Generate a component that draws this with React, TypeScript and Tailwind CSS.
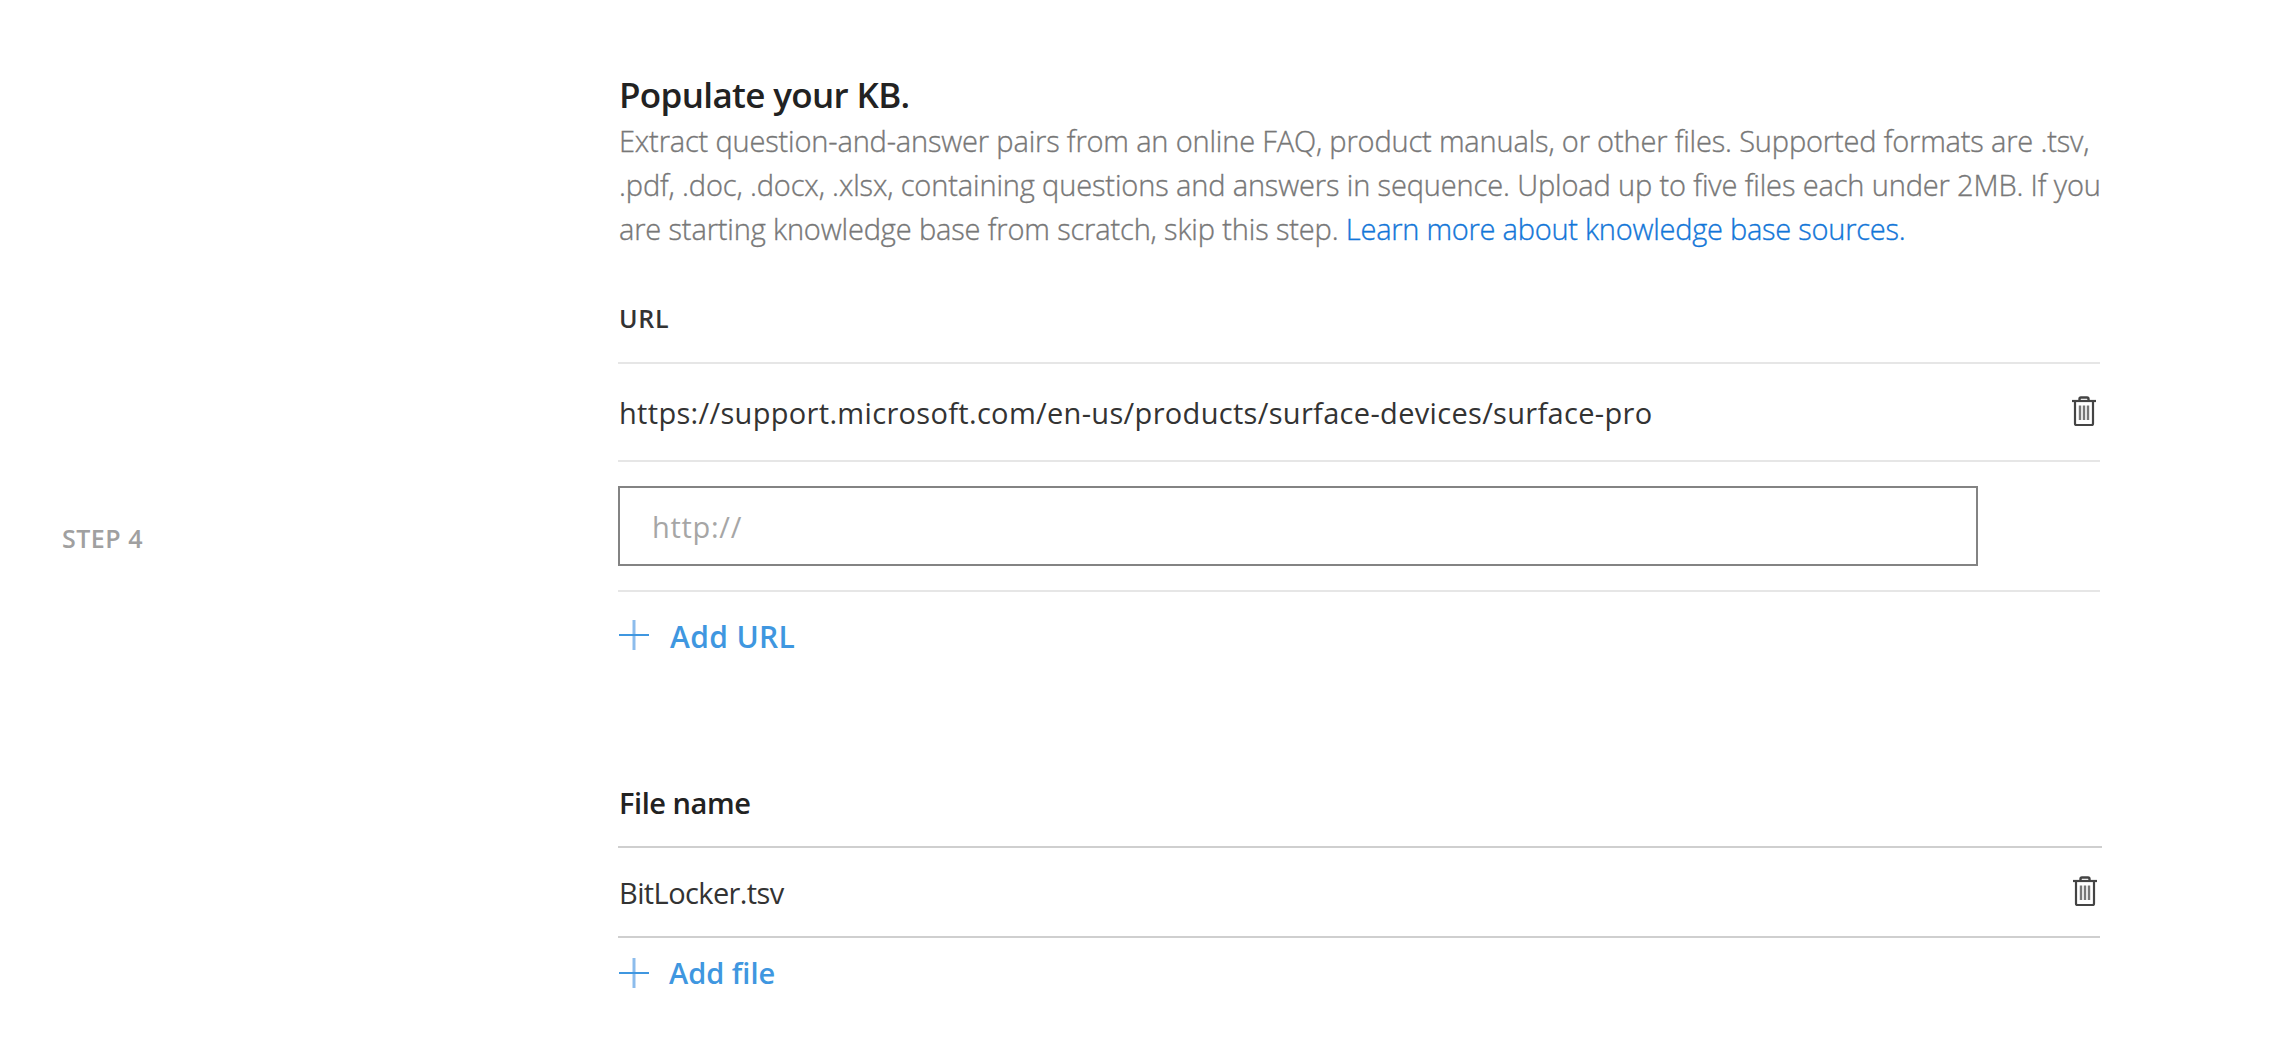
function TrashIcon() {
  return (
    <svg width="28" height="34" viewBox="0 0 28 34" fill="none" stroke="#444" strokeWidth="2.200">
      <path d="M2 6H26" />
      <path d="M9.500 5.500V4Q9.500 2.500 11 2.500H17Q18.500 2.500 18.500 4V5.500" strokeWidth="2.400" />
      <path d="M5 6V28.500Q5 30 6.500 30H21.500Q23 30 23 28.500V6" />
      <path d="M10 10.500V25M14 10.500V25M18 10.500V25" stroke="#777" strokeWidth="2.400" />
    </svg>
  );
}

function PlusIcon() {
  return (
    <svg width="32" height="32" viewBox="0 0 32 32" fill="none" strokeWidth="2">
      <path d="M16 1V31" stroke="#8cbcec" strokeWidth="3" />
      <path d="M1 16H31" stroke="#3f97e0" />
    </svg>
  );
}

export default function App() {
  return (
    <main className="flex h-[1048px] w-[2270px] overflow-hidden bg-white font-['Open_Sans','Noto_Sans',sans-serif] whitespace-nowrap text-[#333]">
      <aside className="w-[618px] shrink-0 pt-[518px] pl-[62px] text-[25px] leading-[40px] font-semibold tracking-[0.5px] text-[#a0a0a0]">
        STEP 4
      </aside>

      <div className="w-[1484px] shrink-0 pt-[71px]">
        <h1 className="pl-px text-[35px] leading-[48px] font-semibold tracking-[-0.65px] text-[#222]">Populate your KB.</h1>
        <p className="pl-px text-[29px] leading-[44px] font-light text-[#777] [-webkit-text-stroke:0.35px]">
          <span className="block tracking-[-0.17px]">
            Extract question-and-answer pairs from an online FAQ, product manuals, or other files. Supported formats are .tsv,
          </span>
          <span className="block tracking-[-0.14px]">
            .pdf, .doc, .docx, .xlsx, containing questions and answers in sequence. Upload up to five files each under 2MB. If you
          </span>
          <span className="block tracking-[-0.15px]">
            are starting knowledge base from scratch, skip this step.{" "}
            <a className="tracking-[-0.25px] text-[#1276d8]">Learn more about knowledge base sources.</a>
          </span>
        </p>

        <section className="w-[1482px]">
          <h2 className="h-[113px] border-b-2 border-[#e6e6e6] pt-[47px] pl-px text-[25px] leading-[40px] font-semibold tracking-[0.7px]">
            URL
          </h2>
          <div className="flex h-[98px] items-center justify-between border-b-2 border-[#e6e6e6]">
            <span className="pt-px pl-px text-[29px] tracking-[0.32px]">
              https://support.microsoft.com/en-us/products/surface-devices/surface-pro
            </span>
            <span className="pr-[2px]"><TrashIcon /></span>
          </div>
          <div className="h-[130px] border-b-2 border-[#e6e6e6] pt-[24px]">
            <input
              className="h-[80px] w-[1360px] border-2 border-[#838383] pl-[32px] text-[29px] tracking-[0.7px] outline-none placeholder:text-[#a6a6a6]"
              placeholder="http://"
            />
          </div>
          <button className="flex h-[86px] items-center gap-[20px] text-[#3f97e0]">
            <PlusIcon />
            <span className="pt-[2px] text-[30px] font-semibold tracking-[0.35px]">Add URL</span>
          </button>
        </section>

        <section className="mt-[79px]">
          <h2 className="flex h-[91px] items-center border-b-2 border-[#cfcfcf] pt-[2px] pl-px text-[29px] font-semibold tracking-[-0.45px] text-[#222]">
            File name
          </h2>
          <div className="flex h-[90px] w-[1482px] items-center justify-between border-b-2 border-[#cfcfcf]">
            <span className="pt-[2px] pl-px text-[29px] tracking-[-0.6px]">BitLocker.tsv</span>
            <span className="pr-px"><TrashIcon /></span>
          </div>
          <button className="flex h-[70px] items-center gap-[19px] text-[#3f97e0]">
            <PlusIcon />
            <span className="pb-px text-[29px] font-semibold">Add file</span>
          </button>
        </section>
      </div>
    </main>
  );
}
